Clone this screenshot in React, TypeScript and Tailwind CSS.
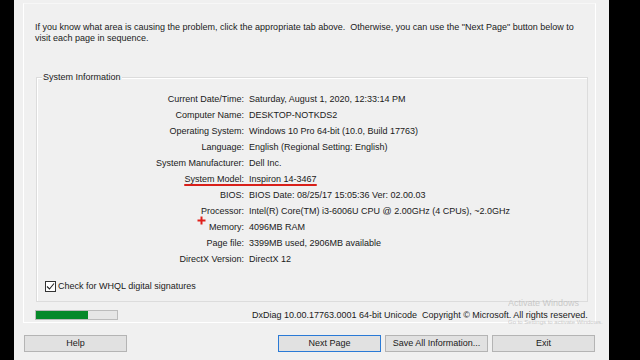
const rows: [string, string][] = [
  ["Current Date/Time:", "Saturday, August 1, 2020, 12:33:14 PM"],
  ["Computer Name:", "DESKTOP-NOTKDS2"],
  ["Operating System:", "Windows 10 Pro 64-bit (10.0, Build 17763)"],
  ["Language:", "English (Regional Setting: English)"],
  ["System Manufacturer:", "Dell Inc."],
  ["System Model:", "Inspiron 14-3467"],
  ["BIOS:", "BIOS Date: 08/25/17 15:05:36 Ver: 02.00.03"],
  ["Processor:", "Intel(R) Core(TM) i3-6006U CPU @ 2.00GHz (4 CPUs), ~2.0GHz"],
  ["Memory:", "4096MB RAM"],
  ["Page file:", "3399MB used, 2906MB available"],
  ["DirectX Version:", "DirectX 12"],
];

const Btn = ({ label, focus }: { label: string; focus?: boolean }) => (
  <div
    className={
      "w-[103px] h-[17px] flex items-center justify-center bg-[#e1e1e1] border " +
      (focus ? "border-[#2a7ad6]" : "border-[#b4b4b4]")
    }
  >
    {label}
  </div>
);

const App = () => {
  return (
    <div
      className="w-[640px] h-[360px] bg-black flex text-[9px] text-[#1a1a1a] overflow-hidden"
      style={{ fontFamily: '"Liberation Sans", Arial, sans-serif' }}
    >
      <div className="w-[14px]" />
      <div className="w-[595px] h-full bg-[#f0f0f0] flex flex-col relative">
        {/* tab panel */}
        <div className="mt-[3px] ml-[9px] mr-[13px] h-[320px] border border-white border-t-[#f7f7f7] flex flex-col pl-[11px] pr-[7px]">
          <p className="mt-[18px] leading-[11px] whitespace-nowrap">
            If you know what area is causing the problem, click the appropriate tab above.&nbsp; Otherwise, you can use the "Next Page" button below to
            <br />
            visit each page in sequence.
          </p>

          {/* group box */}
          <div className="relative mt-[33px] h-[225px] border border-[#dcdcdc] shadow-[inset_1px_1px_0_#fff] ml-px">
            <span className="absolute -top-[7px] left-[5px] px-px bg-[#f0f0f0]">System Information</span>
            <div className="pt-[13px] grid grid-cols-[207px_1fr] gap-x-[5px]">
              {rows.map(([k, v]) => (
                <div key={k} className="contents">
                  <div className="text-right h-[16px] leading-[16px]">{k}</div>
                  <div className="h-[16px] leading-[16px]">{v}</div>
                </div>
              ))}
            </div>
            {/* red annotations */}
            <div className="absolute left-[147px] top-[106px] w-[133px] h-[2px] bg-[#d8201a] rounded-full" />
            <svg className="absolute left-[160px] top-[138px]" width="9" height="9" viewBox="0 0 9 9">
              <path d="M4.5 0.5 V8.5 M0.5 4.5 H8.5" stroke="#e0201a" strokeWidth="2" />
            </svg>

            <div className="flex items-center mt-[13px] ml-[8px] gap-[2px]">
              <div className="w-[11px] h-[11px] border border-[#333] bg-white flex items-center justify-center">
                <svg width="9" height="9" viewBox="0 0 9 9">
                  <path d="M1 4.5 L3.5 7 L8 1.5" fill="none" stroke="#222" strokeWidth="1.1" />
                </svg>
              </div>
              <span>Check for WHQL digital signatures</span>
            </div>
          </div>

          {/* progress + version */}
          <div className="flex items-center mt-[7px]">
            <div className="w-[83px] h-[10px] bg-[#e6e6e6] border border-[#bcbcbc] flex">
              <div className="w-[52px] h-full bg-[#06892a]" />
            </div>
            <span className="ml-[134px]">
              DxDiag 10.00.17763.0001 64-bit Unicode&nbsp; Copyright © Microsoft. All rights reserved.
            </span>
          </div>
        </div>

        {/* faint activation watermark overlay */}
        <div className="absolute left-[494px] top-[299px] text-[#b0b0b0] opacity-60 whitespace-nowrap pointer-events-none">
          <div className="text-[9px] leading-[9px]">Activate Windows</div>
          <div className="text-[6px] leading-[6px] mt-[11px]">Go to Settings to activate Windows.</div>
        </div>

        {/* buttons */}
        <div className="flex mt-[12px] ml-[10px]">
          <Btn label="Help" />
          <div className="ml-[151px] flex gap-[4px]">
            <Btn label="Next Page" focus />
            <Btn label="Save All Information..." />
            <Btn label="Exit" />
          </div>
        </div>
      </div>
    </div>
  );
};

export default App;
